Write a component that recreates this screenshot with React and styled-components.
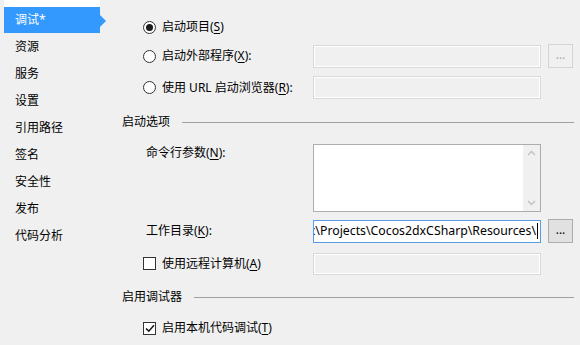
import React from 'react'
import styled, { createGlobalStyle } from 'styled-components'

const GlobalStyle = createGlobalStyle`
  html, body {
    margin: 0;
    padding: 0;
  }
  body {
    background: #f0f0f0;
    font-family: "Segoe UI", "Noto Sans", "Noto Sans CJK SC", sans-serif;
    font-size: 12px;
    color: #000;
  }
`

const Page = styled.div`
  display: flex;
  width: 580px;
  height: 345px;
  overflow: hidden;
  background: #f0f0f0;
`

const Sidebar = styled.ul`
  list-style: none;
  margin: 0 0 0 4px;
  padding: 0;
  width: 96px;
  flex-shrink: 0;
  border-top: 7px solid #fff;
`

const NavItem = styled.li`
  position: relative;
  display: flex;
  align-items: center;
  height: ${p => (p.$active ? 26 : 27)}px;
  padding-left: 11px;
  line-height: 16px;
  background: ${p => (p.$active ? '#3399ff' : 'transparent')};
  color: ${p => (p.$active ? '#fff' : '#000')};

  &::after {
    content: '';
    display: ${p => (p.$active ? 'block' : 'none')};
    position: absolute;
    right: -6px;
    top: 8px;
    border-left: 6px solid #3399ff;
    border-top: 6px solid transparent;
    border-bottom: 6px solid transparent;
  }
`

const Content = styled.div`
  flex: 1;
  min-width: 0;
  display: flex;
  flex-direction: column;
  padding: 15px 6px 0 22px;
`

const Row = styled.div`
  display: grid;
  grid-template-columns: 184px 228px 25px;
  column-gap: 7px;
  align-items: ${p => p.$align || 'center'};
  height: ${p => p.$h}px;
  margin-top: ${p => p.$top || 0}px;
`

const Choice = styled.label`
  display: flex;
  align-items: center;
  gap: 6px;
  padding-left: 21px;
  line-height: 16px;
  white-space: nowrap;
`

const Label = styled.div`
  padding-left: 24px;
  padding-top: ${p => p.$pt || 0}px;
  line-height: 16px;
  white-space: nowrap;
`

const Key = styled.span`
  text-decoration: underline;
  text-underline-offset: 2px;
`

const Radio = styled.span`
  flex-shrink: 0;
  width: 13px;
  height: 13px;
  box-sizing: border-box;
  border: 1px solid #333;
  border-radius: 50%;
  background: #fff;
  display: flex;
  align-items: center;
  justify-content: center;

  &::before {
    content: '';
    display: ${p => (p.$on ? 'block' : 'none')};
    width: 7px;
    height: 7px;
    border-radius: 50%;
    background: #1a1a1a;
  }
`

const Box = styled.span`
  flex-shrink: 0;
  width: 13px;
  height: 13px;
  box-sizing: border-box;
  border: 1px solid #333;
  background: #fff;
  display: flex;
  align-items: center;
  justify-content: center;
`

const Field = styled.div`
  box-sizing: border-box;
  height: ${p => p.$h || 23}px;
  border: 1px solid ${p => (p.$focus ? '#569de5' : p.$disabled ? '#d9d9d9' : '#abadb3')};
  background: ${p => (p.$disabled ? '#f0f0f0' : '#fff')};
  box-shadow: ${p => (p.$disabled ? 'inset 0 0 0 1px #fff' : 'none')};
  display: flex;
  align-items: center;
  justify-content: flex-end;
  overflow: hidden;
  white-space: nowrap;
`

const PathText = styled.span`
  flex-shrink: 0;
  font-size: 12.3px;
  line-height: 16px;
  padding-right: 1px;
  border-right: 1px solid #000;
  margin-right: 2px;
`

const Memo = styled.div`
  box-sizing: border-box;
  height: 68px;
  border: 1px solid #abadb3;
  background: #fff;
  display: flex;
  justify-content: flex-end;
`

const ScrollBar = styled.div`
  width: 17px;
  background: #f0f0f0;
  display: flex;
  flex-direction: column;
  justify-content: space-between;
  align-items: center;
  padding: 5px 0;
`

const Browse = styled.button`
  box-sizing: border-box;
  width: 25px;
  height: 24px;
  padding: 0 0 4px;
  border: 1px solid ${p => (p.disabled ? '#d4d4d4' : '#adadad')};
  background: ${p => (p.disabled ? '#f0f0f0' : '#e1e1e1')};
  color: ${p => (p.disabled ? '#a8a8a8' : '#000')};
  font: inherit;
  line-height: 16px;
  display: flex;
  align-items: flex-end;
  justify-content: center;
`

const Section = styled.div`
  display: flex;
  align-items: center;
  gap: 12px;
  height: 16px;
  line-height: 16px;
  margin-top: ${p => p.$top}px;
  white-space: nowrap;

  &::after {
    content: '';
    flex: 1;
    height: 1px;
    background: #a0a0a0;
  }
`

const Chevron = ({ up }) => (
  <svg width="9" height="6" viewBox="0 0 9 6">
    <path
      d={up ? 'M1 5 L4.5 1.5 L8 5' : 'M1 1 L4.5 4.5 L8 1'}
      fill="none"
      stroke="#c0c0c0"
      strokeWidth="1.3"
    />
  </svg>
)

const Check = () => (
  <svg width="10" height="9" viewBox="0 0 10 9">
    <path d="M1 4.5 L3.8 7.2 L9 1.2" fill="none" stroke="#1a1a1a" strokeWidth="1.6" />
  </svg>
)

const pages = ['调试*', '资源', '服务', '设置', '引用路径', '签名', '安全性', '发布', '代码分析']

const App = () => (
  <Page>
    <GlobalStyle />
    <Sidebar>
      {pages.map((name, i) => (
        <NavItem key={name} $active={i === 0}>{name}</NavItem>
      ))}
    </Sidebar>

    <Content>
      <Row $h={24}>
        <Choice><Radio $on /><span>启动项目(<Key>S</Key>)</span></Choice>
      </Row>
      <Row $h={24} $top={5}>
        <Choice><Radio /><span>启动外部程序(<Key>X</Key>):</span></Choice>
        <Field $disabled />
        <Browse disabled>...</Browse>
      </Row>
      <Row $h={23} $top={8}>
        <Choice><Radio /><span>使用 URL 启动浏览器(<Key>R</Key>):</span></Choice>
        <Field $disabled />
      </Row>

      <Section $top={15}>启动选项</Section>

      <Row $h={68} $top={14} $align="start">
        <Label $pt={1}>命令行参数(<Key>N</Key>):</Label>
        <Memo>
          <ScrollBar>
            <Chevron up />
            <Chevron />
          </ScrollBar>
        </Memo>
      </Row>
      <Row $h={24} $top={7}>
        <Label>工作目录(<Key>K</Key>):</Label>
        <Field $focus>
          <PathText>D:\Cocos2d-x\Projects\Cocos2dxCSharp\Resources\</PathText>
        </Field>
        <Browse>...</Browse>
      </Row>
      <Row $h={23} $top={9}>
        <Choice><Box /><span>使用远程计算机(<Key>A</Key>)</span></Choice>
        <Field $disabled $h={22} />
      </Row>

      <Section $top={14}>启用调试器</Section>

      <Row $h={16} $top={15}>
        <Choice><Box><Check /></Box><span>启用本机代码调试(<Key>T</Key>)</span></Choice>
      </Row>
    </Content>
  </Page>
)

export default App
